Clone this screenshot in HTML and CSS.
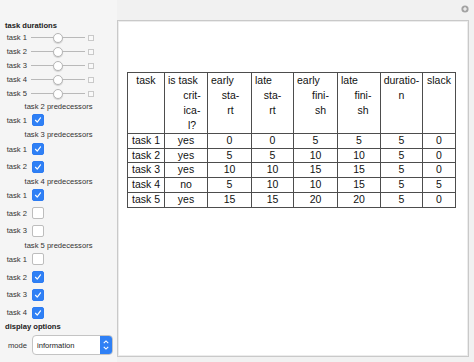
FILE: index.html
```
<!DOCTYPE html>
<html>
	<head>
		<meta charset="utf-8">
		<title>critical path</title>
		<link rel="stylesheet" href="styles.css">
	</head>
	<body>
		<div class="app">
			<!-- 左边 控件 -->
			<div class="controls">
				<div class="group">task durations</div>
				<div class="srow"><span class="lbl">task 1</span><div class="slider"><i class="line"></i><i class="knob"></i><i class="line"></i></div><i class="plus"></i></div>
				<div class="srow"><span class="lbl">task 2</span><div class="slider"><i class="line"></i><i class="knob"></i><i class="line"></i></div><i class="plus"></i></div>
				<div class="srow"><span class="lbl">task 3</span><div class="slider"><i class="line"></i><i class="knob"></i><i class="line"></i></div><i class="plus"></i></div>
				<div class="srow"><span class="lbl">task 4</span><div class="slider"><i class="line"></i><i class="knob"></i><i class="line"></i></div><i class="plus"></i></div>
				<div class="srow"><span class="lbl">task 5</span><div class="slider"><i class="line"></i><i class="knob"></i><i class="line"></i></div><i class="plus"></i></div>

				<div class="sub">task 2 predecessors</div>
				<div class="crow"><span class="lbl">task 1</span><span class="cb on"><svg viewBox="0 0 12 12"><path d="M3 6.3 L5.1 8.6 L9 3.4"/></svg></span></div>

				<div class="sub">task 3 predecessors</div>
				<div class="crow"><span class="lbl">task 1</span><span class="cb on"><svg viewBox="0 0 12 12"><path d="M3 6.3 L5.1 8.6 L9 3.4"/></svg></span></div>
				<div class="crow"><span class="lbl">task 2</span><span class="cb on"><svg viewBox="0 0 12 12"><path d="M3 6.3 L5.1 8.6 L9 3.4"/></svg></span></div>

				<div class="sub">task 4 predecessors</div>
				<div class="crow"><span class="lbl">task 1</span><span class="cb on"><svg viewBox="0 0 12 12"><path d="M3 6.3 L5.1 8.6 L9 3.4"/></svg></span></div>
				<div class="crow"><span class="lbl">task 2</span><span class="cb"></span></div>
				<div class="crow"><span class="lbl">task 3</span><span class="cb"></span></div>

				<div class="sub">task 5 predecessors</div>
				<div class="crow"><span class="lbl">task 1</span><span class="cb"></span></div>
				<div class="crow"><span class="lbl">task 2</span><span class="cb on"><svg viewBox="0 0 12 12"><path d="M3 6.3 L5.1 8.6 L9 3.4"/></svg></span></div>
				<div class="crow"><span class="lbl">task 3</span><span class="cb on"><svg viewBox="0 0 12 12"><path d="M3 6.3 L5.1 8.6 L9 3.4"/></svg></span></div>
				<div class="crow"><span class="lbl">task 4</span><span class="cb on"><svg viewBox="0 0 12 12"><path d="M3 6.3 L5.1 8.6 L9 3.4"/></svg></span></div>

				<div class="group">display options</div>
				<div class="mrow">
					<span class="lbl">mode</span>
					<div class="select">
						<span class="val">information</span>
						<span class="step"><svg viewBox="0 0 12 20"><path d="M3.5 8 L6 5.5 L8.5 8 M3.5 12 L6 14.5 L8.5 12"/></svg></span>
					</div>
				</div>
			</div>

			<!-- 右边 输出 -->
			<div class="output">
				<div class="topbar">
					<svg class="addbtn" viewBox="0 0 10 10"><circle cx="5" cy="5" r="4.5"/><path d="M5 2.6 V7.4 M2.6 5 H7.4"/></svg>
				</div>
				<div class="panel">
					<table class="tbl">
						<colgroup>
							<col class="c1"><col class="c2"><col class="c3"><col class="c4"><col class="c5"><col class="c6"><col class="c7"><col class="c8">
						</colgroup>
						<tr class="head">
							<th><div class="mid">task</div></th>
							<th><div class="first">is task</div><div class="cont s12">crit-</div><div class="cont s12">ica-</div><div class="cont s12">l?</div></th>
							<th><div class="first">early</div><div class="cont s2">sta-</div><div class="cont s2">rt</div></th>
							<th><div class="first">late</div><div class="cont">sta-</div><div class="cont">rt</div></th>
							<th><div class="first">early</div><div class="cont s10">fini-</div><div class="cont s10">sh</div></th>
							<th><div class="first">late</div><div class="cont s8">fini-</div><div class="cont s8">sh</div></th>
							<th><div class="mid">duratio-</div><div class="mid">n</div></th>
							<th><div class="mid">slack</div></th>
						</tr>
						<tr><td>task 1</td><td>yes</td><td>0</td><td>0</td><td>5</td><td>5</td><td>5</td><td>0</td></tr>
						<tr><td>task 2</td><td>yes</td><td>5</td><td>5</td><td>10</td><td>10</td><td>5</td><td>0</td></tr>
						<tr><td>task 3</td><td>yes</td><td>10</td><td>10</td><td>15</td><td>15</td><td>5</td><td>0</td></tr>
						<tr><td>task 4</td><td>no</td><td>5</td><td>10</td><td>10</td><td>15</td><td>5</td><td>5</td></tr>
						<tr><td>task 5</td><td>yes</td><td>15</td><td>15</td><td>20</td><td>20</td><td>5</td><td>0</td></tr>
					</table>
				</div>
			</div>
		</div>
	</body>
</html>
```
FILE: styles.css
```
/* 整体 */
body{
	margin: 0;
	background-color: #f1f1f1;
	font-family: "Liberation Sans", Arial, sans-serif;
}
.app{
	display: flex;
	height: 362px;
}

/* 左边控件 */
.controls{
	width: 117px;
	padding-top: 19.5px;
	font-size: 7.6px;
	color: #333;
	background-color: #f5f5f5;
}
.group{
	height: 11px;
	line-height: 11px;
	padding-left: 5px;
	font-weight: 700;
	color: #222;
}
.sub{
	height: 11px;
	line-height: 11px;
	text-align: center;
}
.lbl{
	width: 27px;
	flex: none;
	text-align: right;
}
.srow{
	display: flex;
	align-items: center;
	height: 14px;
}
.slider{
	display: flex;
	align-items: center;
	width: 54px;
	margin-left: 4px;
}
.slider .line{
	flex: 1;
	height: 1px;
	background-color: #b9b9b9;
}
.slider .knob{
	width: 8px;
	height: 8px;
	border: 1px solid #b5b5b5;
	border-radius: 50%;
	background-color: #fff;
	box-shadow: 0 1px 1px rgba(0,0,0,0.15);
}
.plus{
	width: 4px;
	height: 4px;
	margin-left: 3px;
	border: 1px solid #c9c9c9;
	background-color: #f9f9f9;
}
.crow{
	display: flex;
	align-items: center;
	height: 17.7px;
}
.cb{
	width: 10px;
	height: 10px;
	margin-left: 5px;
	border: 1px solid #bdbdbd;
	border-radius: 2px;
	background-color: #fff;
}
.cb.on{
	border-color: #2d7cf3;
	background-color: #2f80f5;
}
.cb svg{
	display: block;
	width: 10px;
	height: 10px;
	fill: none;
	stroke: #fff;
	stroke-width: 1.4;
	stroke-linecap: round;
	stroke-linejoin: round;
}
.mrow{
	display: flex;
	align-items: center;
	height: 22px;
	margin-top: 2px;
}
.select{
	display: flex;
	align-items: center;
	width: 79px;
	height: 18px;
	margin-left: 5px;
	border: 1px solid #c4c4c4;
	border-radius: 4px;
	background-color: #fff;
	overflow: hidden;
}
.select .val{
	flex: 1;
	padding-left: 4px;
	color: #222;
}
.select .step{
	width: 12px;
	height: 18px;
	background-color: #2f80f5;
}
.step svg{
	display: block;
	width: 12px;
	height: 18px;
	fill: none;
	stroke: #fff;
	stroke-width: 1.2;
}

/* 右边输出 */
.output{
	flex: 1;
	display: flex;
	flex-direction: column;
	padding-right: 5px;
	padding-bottom: 5px;
}
.topbar{
	display: flex;
	justify-content: flex-end;
	align-items: center;
	height: 20px;
	padding-right: 0;
}
.addbtn{
	width: 8px;
	height: 8px;
	margin-bottom: 3px;
}
.addbtn circle{
	fill: #a3a3a3;
}
.addbtn path{
	stroke: #fff;
	stroke-width: 1.3;
}
.panel{
	flex: 1;
	background-color: #fff;
	border: 1px solid #c9c9c9;
	box-shadow: inset 0 0 0 1px #ececec;
	padding: 51px 0 0 9px;
}

/* 表格 */
.tbl{
	border-collapse: collapse;
	table-layout: fixed;
	width: 328px;
	font-size: 10.5px;
	color: #111;
}
.c1{ width: 37px; }
.c2{ width: 43px; }
.c3{ width: 44px; }
.c4{ width: 42px; }
.c5{ width: 44px; }
.c6{ width: 43px; }
.c7{ width: 42px; }
.c8{ width: 33px; }
.tbl th, .tbl td{
	border: 1px solid #4d4d4d;
	padding: 0;
	font-weight: normal;
	white-space: nowrap;
	overflow: hidden;
}
.tbl th{
	height: 60px;
	vertical-align: top;
	line-height: 15px;
}
.tbl td{
	height: 13.7px;
	line-height: 13.7px;
	text-align: center;
}
.head .mid{
	text-align: center;
}
.head .first{
	text-align: left;
	padding-left: 3px;
}
.head .cont{
	text-align: center;
}
.head .s12{ padding-left: 12px; }
.head .s10{ padding-left: 10px; }
.head .s8{ padding-left: 8px; }
.head .s2{ padding-left: 2px; }
```
